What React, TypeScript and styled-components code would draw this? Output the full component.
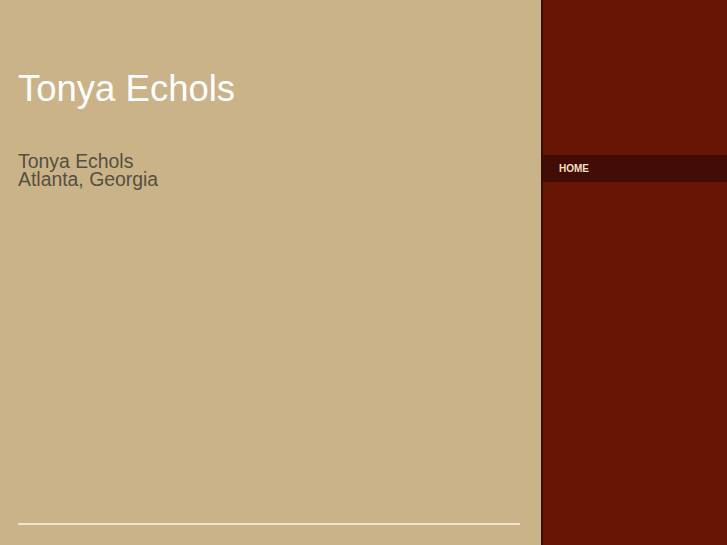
import * as React from "react";
import styled, { createGlobalStyle } from "styled-components";

const GlobalStyle = createGlobalStyle`
  html, body {
    margin: 0;
    padding: 0;
    height: 100%;
  }
  body {
    font-family: "Liberation Sans", Arial, sans-serif;
    background-color: #671505;
  }
`;

const Page = styled.div`
  display: flex;
  width: 727px;
  height: 545px;
  overflow: hidden;
`;

const Main = styled.div`
  width: 543px;
  flex-shrink: 0;
  background-color: #cbb389;
  border-right: 2px solid #3a0d04;
  padding: 0 22px 0 18px;
  box-sizing: border-box;
  display: flex;
  flex-direction: column;
`;

const Title = styled.h1`
  margin: 68px 0 0;
  font-size: 36.5px;
  font-weight: normal;
  line-height: 42px;
  color: #ffffff;
`;

const Address = styled.div`
  margin-top: 42px;
  font-size: 19.4px;
  line-height: 18px;
  color: #55503f;
`;

const Rule = styled.hr`
  margin: auto 0 20px;
  border: none;
  height: 2px;
  background-color: #efe6d2;
  width: 502px;
`;

const Sidebar = styled.nav`
  flex: 1;
  background-color: #671505;
  padding-top: 155px;
`;

const NavItem = styled.div`
  height: 27px;
  background-color: #420d04;
  display: flex;
  align-items: center;
  padding-left: 16px;
  font-size: 10px;
  font-weight: bold;
  color: #f3dfc4;
`;

export default function App() {
  return (
    <>
      <GlobalStyle />
      <Page>
        <Main>
          <Title>Tonya Echols</Title>
          <Address>
            Tonya Echols
            <br />
            Atlanta, Georgia
          </Address>
          <Rule />
        </Main>
        <Sidebar>
          <NavItem>HOME</NavItem>
        </Sidebar>
      </Page>
    </>
  );
}
